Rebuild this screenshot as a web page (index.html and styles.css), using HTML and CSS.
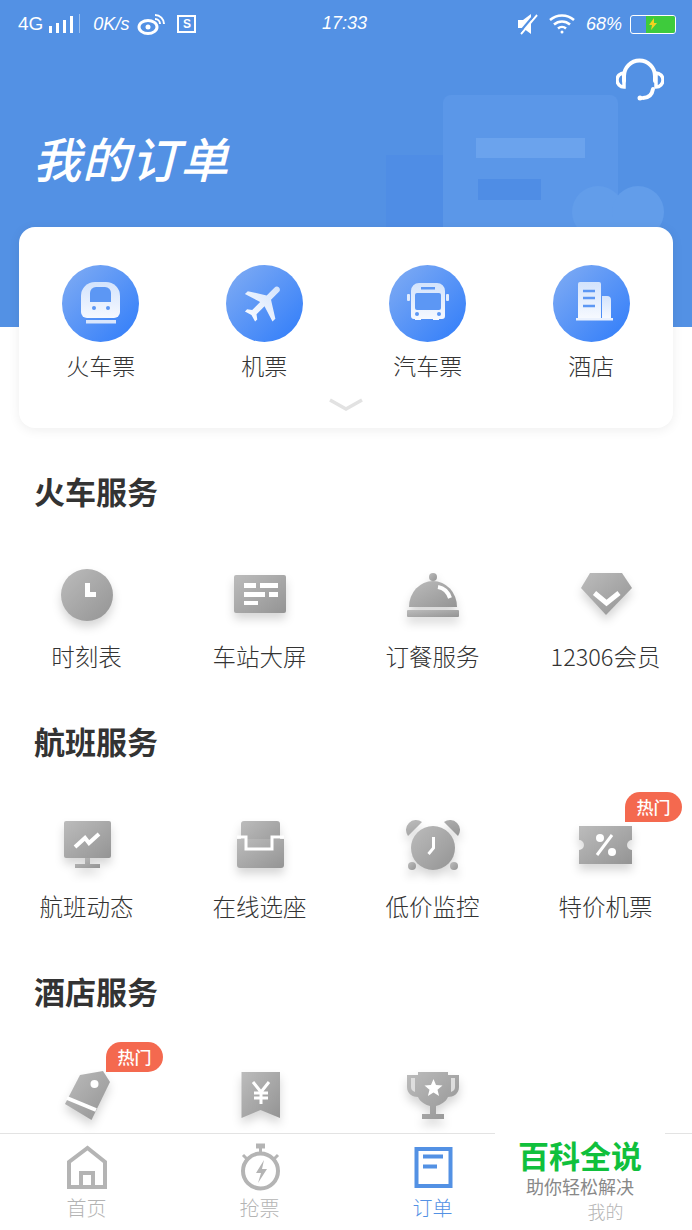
FILE: index.html
```html
<!DOCTYPE html>
<html lang="zh">

<head>
  <meta charset="utf-8">
  <title>我的订单</title>
  <link rel="stylesheet" href="styles.css">
</head>

<body>

  <svg class="defs" width="0" height="0">
    <defs>
      <linearGradient id="gray" x1="0" y1="0" x2="1" y2="1">
        <stop offset="0" stop-color="#bcbcbc" />
        <stop offset="1" stop-color="#949494" />
      </linearGradient>
      <linearGradient id="blue" x1="0" y1="0" x2="1" y2="1">
        <stop offset="0" stop-color="#82adf3" />
        <stop offset="1" stop-color="#2f7cfa" />
      </linearGradient>
      <linearGradient id="pale" x1="0" y1="0" x2="0" y2="1">
        <stop offset="0" stop-color="#d3e3fc" />
        <stop offset="1" stop-color="#f6f9ff" />
      </linearGradient>
    </defs>
  </svg>

  <div class="page">

    <header class="hero">
      <svg class="hero-art" width="692" height="327" viewBox="0 0 692 327">
        <rect x="386" y="155" width="60" height="172" fill="#4f8de5" />
        <path d="M443 103a8 8 0 0 1 8-8h159a8 8 0 0 1 8 8v224H443z" fill="#5b97e8" />
        <rect x="476" y="138" width="109" height="20" fill="#6ba3ed" />
        <rect x="478" y="179" width="63" height="21" fill="#4f8de5" />
        <circle cx="598" cy="212" r="26" fill="#629dea" />
        <circle cx="638" cy="212" r="26" fill="#629dea" />
      </svg>

      <div class="status">
        <div class="status-left">
          <span class="net">4G</span>
          <svg width="34" height="20" viewBox="0 0 34 20" fill="#fff">
            <rect x="1" y="12" width="3" height="7" />
            <rect x="8" y="9" width="3" height="10" />
            <rect x="15" y="6" width="3" height="13" />
            <rect x="22" y="2" width="3" height="17" />
            <rect x="31" y="0" width="1" height="19" opacity=".4" />
          </svg>
          <span class="speed">0K/s</span>
          <svg width="28" height="22" viewBox="0 0 28 22" fill="none" stroke="#fff">
            <ellipse cx="11" cy="14" rx="9" ry="6.5" stroke-width="3" />
            <circle cx="11" cy="14" r="2.5" fill="#fff" stroke="none" />
            <path d="M18 6a5 5 0 0 1 5 5M18 2a9 9 0 0 1 9 9" stroke-width="2" />
          </svg>
          <span class="sim">S</span>
        </div>
        <span class="clock">17:33</span>
        <div class="status-right">
          <svg width="22" height="22" viewBox="0 0 22 22" fill="#fff">
            <path d="M1 7h5l8-6v20l-8-6H1z" />
            <path d="M20 2L4 21" stroke="#fff" stroke-width="2" />
            <path d="M18 1L2 20" stroke="#5391e4" stroke-width="2" />
          </svg>
          <svg width="29" height="20" viewBox="0 0 29 20" fill="none" stroke="#fff" stroke-width="2.5">
            <path d="M1 6a18 18 0 0 1 24 0M5 10.500a12 12 0 0 1 16 0M9 14.500a6 6 0 0 1 8 0" />
            <circle cx="13" cy="18" r="1.500" fill="#fff" stroke="none" />
          </svg>
          <span class="percent">68%</span>
          <div class="battery">
            <div class="battery-level">
              <svg width="10" height="12" viewBox="0 0 10 12" fill="#f2d21f">
                <path d="M6 0L1 7h3L3 12l6-7H6z" />
              </svg>
            </div>
          </div>
        </div>
      </div>

      <div class="hero-tools">
        <svg width="48" height="48" viewBox="0 0 48 48" fill="none" stroke="#fff" stroke-width="4" stroke-linecap="round">
          <path d="M8 24V19a15.500 15.500 0 0 1 31 0v5" />
          <path d="M8 16a6.500 6.500 0 0 0 0 14zM40 16a6.500 6.500 0 0 1 0 14z" stroke-width="3.500" />
          <path d="M37 32c-1 6-5 9-10 9" />
          <circle cx="24" cy="41" r="2.500" fill="#fff" stroke="none" />
        </svg>
      </div>

      <h1 class="hero-title">我的订单</h1>
    </header>

    <main class="content">
      <section class="card">
        <div class="card-row">
          <div class="card-item">
            <svg width="77" height="77" viewBox="0 0 77 77">
              <circle cx="38.500" cy="38.500" r="38.500" fill="url(#blue)" />
              <path d="M33 17h11a14 14 0 0 1 14 14v16a6 6 0 0 1-6 6H25a6 6 0 0 1-6-6V31a14 14 0 0 1 14-14z" fill="url(#pale)" />
              <path d="M34 22h9a6 6 0 0 1 6 6v9H28v-9a6 6 0 0 1 6-6z" fill="#5c97f4" />
              <circle cx="32" cy="43" r="2" fill="#5c97f4" />
              <circle cx="46" cy="43" r="2" fill="#5c97f4" />
              <rect x="24" y="55" width="30" height="3.500" fill="#d9e6fc" />
            </svg>
            <span class="card-label">火车票</span>
          </div>
          <div class="card-item">
            <svg width="77" height="77" viewBox="0 0 77 77">
              <circle cx="38.500" cy="38.500" r="38.500" fill="url(#blue)" />
              <g transform="translate(38.500 37) rotate(45) scale(2.050) translate(-11.500 -12)">
                <path d="M21 16v-2l-8-5V3.500c0-.83-.67-1.500-1.500-1.500S10 2.670 10 3.500V9l-8 5v2l8-2.500V19l-2 1.500V22l3.500-1 3.500 1v-1.500L13 19v-5.500l8 2.500z" fill="url(#pale)" />
              </g>
            </svg>
            <span class="card-label">机票</span>
          </div>
          <div class="card-item">
            <svg width="77" height="77" viewBox="0 0 77 77">
              <circle cx="38.500" cy="38.500" r="38.500" fill="url(#blue)" />
              <path d="M30 18h18a8 8 0 0 1 8 8v25a3 3 0 0 1-3 3h-3v1h-6v-1H32v1h-6v-1h-1a3 3 0 0 1-3-3V26a8 8 0 0 1 8-8z" fill="url(#pale)" />
              <rect x="26" y="28" width="26" height="17" rx="2" fill="#5c97f4" />
              <rect x="32" y="22" width="14" height="2.500" fill="#5c97f4" />
              <rect x="18" y="29" width="3" height="7" rx="1" fill="#e0ebfd" />
              <rect x="57" y="29" width="3" height="7" rx="1" fill="#e0ebfd" />
              <circle cx="28" cy="49" r="2" fill="#5c97f4" />
              <circle cx="50" cy="49" r="2" fill="#5c97f4" />
            </svg>
            <span class="card-label">汽车票</span>
          </div>
          <div class="card-item">
            <svg width="77" height="77" viewBox="0 0 77 77">
              <circle cx="38.500" cy="38.500" r="38.500" fill="url(#blue)" />
              <path d="M25 19a2 2 0 0 1 2-2h19a2 2 0 0 1 2 2v34H25z" fill="url(#pale)" />
              <path d="M49 31h5a4 4 0 0 1 4 4v18h-9z" fill="url(#pale)" />
              <rect x="23" y="53" width="37" height="2.500" fill="#eaf1fe" />
              <path d="M30 26h12M30 33h12M30 41h12" stroke="#5c97f4" stroke-width="2.500" />
            </svg>
            <span class="card-label">酒店</span>
          </div>
        </div>
        <svg class="card-more" width="34" height="13" viewBox="0 0 34 13" fill="none" stroke="#e2e2e2" stroke-width="3.500">
          <path d="M1 2l16 9 16-9" />
        </svg>
      </section>

      <section class="service">
        <h2 class="service-title">火车服务</h2>
        <div class="service-grid">
          <div class="service-item">
            <svg class="glyph" width="60" height="60" viewBox="0 0 60 60">
              <circle cx="30" cy="30" r="26" fill="url(#gray)" />
              <path d="M28 18h5v9h6v5H28z" fill="#fff" />
            </svg>
            <span class="service-label">时刻表</span>
          </div>
          <div class="service-item">
            <svg class="glyph" width="60" height="60" viewBox="0 0 60 60">
              <rect x="4" y="10" width="52" height="38" rx="2" fill="url(#gray)" />
              <path d="M14 18h12v5H14zM30 18h18v5H30zM14 27h21v5H14zM39 27h9v5h-9zM14 36h14v4H14z" fill="#fff" />
            </svg>
            <span class="service-label">车站大屏</span>
          </div>
          <div class="service-item">
            <svg class="glyph" width="60" height="60" viewBox="0 0 60 60">
              <circle cx="30" cy="12" r="4" fill="url(#gray)" />
              <path d="M6 42a24 26 0 0 1 48 0z" fill="url(#gray)" />
              <rect x="4" y="45" width="52" height="7" rx="1" fill="url(#gray)" />
              <path d="M35 22c6 1 10 5 12 11" fill="none" stroke="#fff" stroke-width="4" />
            </svg>
            <span class="service-label">订餐服务</span>
          </div>
          <div class="service-item">
            <svg class="glyph" width="60" height="60" viewBox="0 0 60 60">
              <path d="M14 8H46L56 23 30 50 5 23z" fill="url(#gray)" />
              <path d="M18.500 28l12 10 12.500-10" fill="none" stroke="#fff" stroke-width="5" />
            </svg>
            <span class="service-label">12306会员</span>
          </div>
        </div>
      </section>

      <section class="service">
        <h2 class="service-title">航班服务</h2>
        <div class="service-grid">
          <div class="service-item">
            <svg class="glyph" width="60" height="60" viewBox="0 0 60 60">
              <rect x="7" y="6" width="47" height="37" rx="2" fill="url(#gray)" />
              <path d="M28 43h5v6h10v4H18v-4h10z" fill="url(#gray)" />
              <path d="M18 32l10-9 4 5 10-9" fill="none" stroke="#fff" stroke-width="4" />
            </svg>
            <span class="service-label">航班动态</span>
          </div>
          <div class="service-item">
            <svg class="glyph" width="60" height="60" viewBox="0 0 60 60">
              <rect x="11" y="6" width="39" height="32" rx="3" fill="url(#gray)" />
              <path d="M7 24h47v26a3 3 0 0 1-3 3H10a3 3 0 0 1-3-3z" fill="url(#gray)" />
              <path d="M7 22h9v12h26V22h12" fill="none" stroke="#fff" stroke-width="3" />
            </svg>
            <span class="service-label">在线选座</span>
          </div>
          <div class="service-item">
            <svg class="glyph" width="60" height="60" viewBox="0 0 60 60">
              <path d="M5 21a10 10 0 0 1 14-14zM55 21a10 10 0 0 0-14-14z" fill="url(#gray)" />
              <circle cx="9" cy="51" r="4" fill="url(#gray)" />
              <circle cx="51" cy="51" r="4" fill="url(#gray)" />
              <circle cx="30" cy="33" r="22" fill="url(#gray)" />
              <path d="M30.500 22v11l-5 6" fill="none" stroke="#fff" stroke-width="3" />
            </svg>
            <span class="service-label">低价监控</span>
          </div>
          <div class="service-item">
            <span class="badge">热门</span>
            <svg class="glyph" width="60" height="60" viewBox="0 0 60 60">
              <path d="M3 11H56V25a5 5 0 0 0 0 10V49H3V35a5 5 0 0 0 0-10z" fill="url(#gray)" />
              <circle cx="24" cy="23" r="4" fill="#fff" />
              <circle cx="36" cy="37" r="4" fill="#fff" />
              <path d="M36 20L21 40" stroke="#fff" stroke-width="3" />
            </svg>
            <span class="service-label">特价机票</span>
          </div>
        </div>
      </section>

      <section class="service">
        <h2 class="service-title">酒店服务</h2>
        <div class="service-grid">
          <div class="service-item">
            <span class="badge">热门</span>
            <svg class="glyph" width="60" height="60" viewBox="0 0 60 60">
              <path d="M46 6l7 11-18.500 38L8 39 23 10z" fill="url(#gray)" />
              <circle cx="37.500" cy="19" r="4" fill="#fff" />
              <path d="M10 33l29 12" stroke="#fff" stroke-width="4" />
            </svg>
          </div>
          <div class="service-item">
            <svg class="glyph" width="60" height="60" viewBox="0 0 60 60">
              <path d="M11.500 7H50V53L30.500 45 11.500 53z" fill="url(#gray)" />
              <path d="M23 17l8 10 8-10M31 27v12M24 28h14M24 33h14" fill="none" stroke="#fff" stroke-width="3" />
            </svg>
          </div>
          <div class="service-item">
            <svg class="glyph" width="60" height="60" viewBox="0 0 60 60">
              <path d="M15 7H45V10H56V22C56 29 50 32 45 32C43 37 37 40 33 41V49H41V54H19V49H27V41C23 40 17 37 15 32C10 32 4 29 4 22V10H15z" fill="url(#gray)" />
              <path d="M8 13H12V27C9 26 8 24 8 22zM52 13H48V27C51 26 52 24 52 22z" fill="#dedede" />
              <path d="M30.500 14l2.500 6 6.500.500-5 4.200 1.600 6.300-5.600-3.400-5.600 3.400 1.600-6.300-5-4.200 6.500-.500z" fill="#fff" />
            </svg>
          </div>
        </div>
      </section>
    </main>

    <nav class="tabs">
      <div class="tab">
        <svg width="50" height="48" viewBox="0 0 50 48" fill="none" stroke="#b4b4b4" stroke-width="4">
          <path d="M7 44V19L25.500 5 43 19V44Z" />
          <path d="M19 44V30h12v14" />
        </svg>
        <span class="tab-label">首页</span>
      </div>
      <div class="tab">
        <svg width="50" height="48" viewBox="0 0 50 48" fill="none" stroke="#b4b4b4" stroke-width="4">
          <circle cx="25.500" cy="28" r="17.500" />
          <path d="M21 3h9" stroke-width="5" />
          <path d="M25.500 3v6M8 12l4 4M43 12l-4 4" stroke-width="3" />
          <path d="M29 17l-8 13h5l-3 10 9-14h-5z" fill="#b4b4b4" stroke="none" />
        </svg>
        <span class="tab-label">抢票</span>
      </div>
      <div class="tab tab-active">
        <svg width="50" height="48" viewBox="0 0 50 48" fill="none" stroke="#5391e4" stroke-width="4">
          <rect x="8.500" y="6" width="34" height="37" />
          <path d="M15 13.500h20M15 23.500h14" />
        </svg>
        <span class="tab-label">订单</span>
      </div>
      <div class="tab">
        <div class="tab-blank"></div>
        <span class="tab-label tab-label-small">我的</span>
      </div>
    </nav>

    <div class="stamp">
      <span class="stamp-name">百科全说</span>
      <span class="stamp-tag">助你轻松解决</span>
    </div>

  </div>

</body>

</html>
```

FILE: styles.css
```css
* {
  box-sizing: border-box;
}

body {
  margin: 0;
  background-color: #fff;
  font-family: "Noto Sans CJK SC", "Noto Sans", sans-serif;
}

.defs {
  position: absolute;
}

.page {
  position: relative;
  width: 692px;
  height: 1230px;
  overflow: hidden;
}

/* header */
.hero {
  position: relative;
  height: 327px;
  background-color: #5391e4;
  color: #fff;
}

.hero-art {
  position: absolute;
  top: 0;
  left: 0;
}

.status {
  position: relative;
  height: 48px;
  padding: 0 16px 0 18px;
  display: grid;
  grid-template-columns: 1fr 1fr;
  align-items: center;
}

.status-left,
.status-right {
  display: flex;
  align-items: center;
}

.status-right {
  justify-content: flex-end;
  gap: 10px;
}

.net {
  font-family: "Liberation Sans", sans-serif;
  font-size: 19px;
  margin-right: 5px;
}

.speed,
.clock,
.percent {
  font-family: "Liberation Sans", sans-serif;
  font-style: italic;
  font-size: 18px;
}

.speed {
  margin: 0 8px 0 11px;
}

.sim {
  width: 19px;
  height: 18px;
  margin-left: 12px;
  border: 2px solid #fff;
  font-family: "Liberation Sans", sans-serif;
  font-size: 12px;
  font-weight: 700;
  line-height: 14px;
  text-align: center;
}

.clock {
  position: absolute;
  left: 322px;
  top: 13px;
}

.percent {
  margin-left: -2px;
}

.battery {
  width: 46px;
  height: 19px;
  margin-left: -2px;
  border: 1px solid #fff;
  border-radius: 3px;
  display: flex;
  justify-content: flex-end;
  overflow: hidden;
}

.battery-level {
  width: 29px;
  background-color: #3ecb3c;
  display: flex;
  align-items: center;
  padding-left: 2px;
}

.hero-tools {
  position: relative;
  display: flex;
  justify-content: flex-end;
  padding: 9px 28px 0 0;
}

.hero-title {
  position: relative;
  margin: 17px 0 0 33px;
  font-size: 48px;
  font-weight: 500;
  font-style: italic;
  letter-spacing: 1px;
  line-height: 70px;
}

/* card */
.content {
  position: relative;
  margin-top: -100px;
}

.card {
  height: 201px;
  margin: 0 19px;
  padding-top: 38px;
  background-color: #fff;
  border-radius: 16px;
  box-shadow: 0 2px 12px rgba(0, 0, 0, 0.07);
  display: flex;
  flex-direction: column;
  align-items: center;
}

.card-row {
  width: 100%;
  display: grid;
  grid-template-columns: repeat(4, 1fr);
}

.card-item {
  display: flex;
  flex-direction: column;
  align-items: center;
}

.card-label {
  margin-top: 8px;
  font-size: 23px;
  font-weight: 300;
  line-height: 30px;
  color: #333;
}

.card-more {
  margin-top: 18px;
}

/* service blocks */
.service {
  height: 250px;
  padding-top: 38px;
}

.service-title {
  margin: 0 0 49px 34px;
  font-size: 31px;
  font-weight: 700;
  line-height: 50px;
  color: #333;
}

.service-grid {
  display: grid;
  grid-template-columns: repeat(4, 173px);
}

.service-item {
  position: relative;
  display: flex;
  flex-direction: column;
  align-items: center;
}

.glyph {
  filter: drop-shadow(0 6px 5px rgba(0, 0, 0, 0.16));
}

.service-label {
  margin-top: 17px;
  font-size: 23.500px;
  font-weight: 300;
  line-height: 28px;
  color: #333;
}

.badge {
  position: absolute;
  top: -23px;
  left: 106px;
  width: 57px;
  height: 30px;
  background-color: #f4694f;
  border-radius: 15px 15px 15px 0;
  color: #fff;
  font-size: 17px;
  font-weight: 500;
  line-height: 30px;
  text-align: center;
  z-index: 1;
}

/* bottom bar */
.tabs {
  position: absolute;
  left: 0;
  bottom: 0;
  width: 692px;
  height: 97px;
  padding-top: 9px;
  background-color: #fff;
  border-top: 1px solid #e3e3e3;
  display: grid;
  grid-template-columns: repeat(4, 173px);
}

.tab {
  display: flex;
  flex-direction: column;
  align-items: center;
  color: #b4b4b4;
}

.tab-active {
  color: #5391e4;
}

.tab-blank {
  height: 48px;
}

.tab-label {
  margin-top: 2px;
  font-size: 20px;
  font-weight: 300;
  line-height: 30px;
}

.tab-label-small {
  margin-top: 5px;
  font-size: 18px;
}

.stamp {
  position: absolute;
  left: 495px;
  top: 1133px;
  width: 170px;
  height: 64px;
  padding-top: 4px;
  background-color: #fff;
  display: flex;
  flex-direction: column;
  align-items: center;
  gap: 2px;
}

.stamp-name {
  font-size: 31px;
  font-weight: 700;
  line-height: 36px;
  color: #10c03c;
}

.stamp-tag {
  font-size: 18px;
  line-height: 22px;
  color: #888;
}
```
